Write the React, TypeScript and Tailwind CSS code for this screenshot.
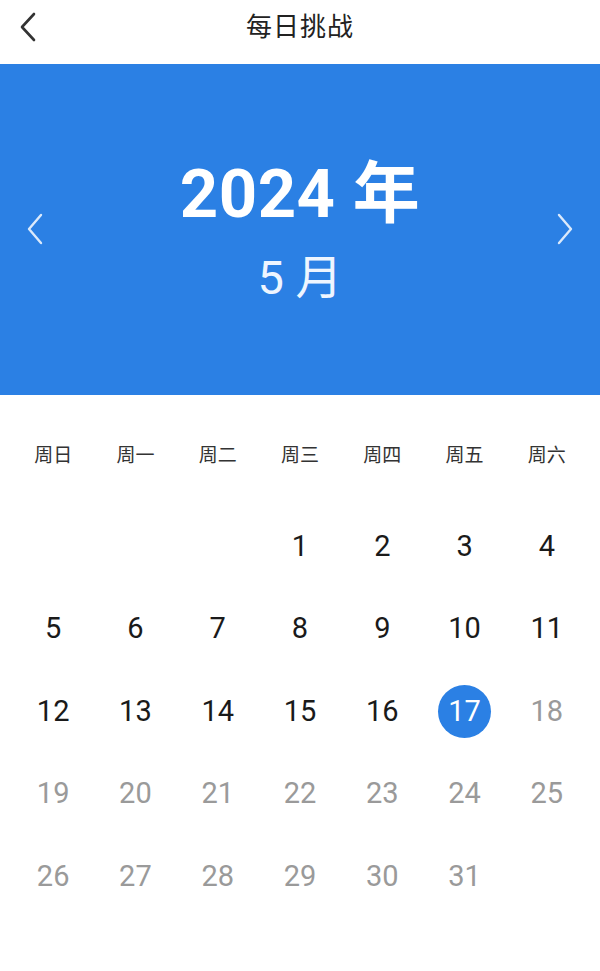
const weekDays = ['周日', '周一', '周二', '周三', '周四', '周五', '周六']

// May 2024 starts on a Wednesday
const cells: (number | null)[] = [null, null, null, ...Array.from({ length: 31 }, (_, i) => i + 1)]
const today = 17

function Chevron({ dir }: { dir: 'left' | 'right' }) {
  return (
    <svg width="22" height="34" viewBox="0 0 22 34" fill="none" stroke="currentColor" strokeWidth="2.4" strokeLinecap="round" strokeLinejoin="round" className="text-[#dbe9fb]">
      <path d={dir === 'left' ? 'M17 3 L5 17 L17 31' : 'M5 3 L17 17 L5 31'} />
    </svg>
  )
}

export default function App() {
  return (
    <div
      className="w-[600px] h-[971px] bg-white overflow-hidden"
      style={{ fontFamily: 'Roboto, "Noto Sans CJK SC", sans-serif' }}
    >
      {/* Top bar */}
      <div className="relative h-[64px] flex items-center justify-center">
        <button className="absolute left-[13px] top-[10px] text-[#333]">
          <svg width="30" height="34" viewBox="0 0 30 34" fill="none" stroke="currentColor" strokeWidth="2.6" strokeLinecap="round" strokeLinejoin="round">
            <path d="M21 4 L9 17 L21 30" />
          </svg>
        </button>
        <h1 className="text-[26px] text-[#222] tracking-[1px] -mt-[10px]">每日挑战</h1>
      </div>

      {/* Month banner */}
      <div className="h-[331px] bg-[#2b80e4] flex items-center justify-between px-[24px]">
        <div className="-mt-[2px]"><Chevron dir="left" /></div>
        <div className="flex flex-col items-center text-white mt-[2px]">
          <div className="text-[67px] font-bold leading-none tracking-[0.5px]">2024 年</div>
          <div className="text-[47px] leading-none mt-[26px] text-[#eef5ff]">5 月</div>
        </div>
        <div className="-mt-[2px]"><Chevron dir="right" /></div>
      </div>

      {/* Calendar */}
      <div className="px-[12px] pt-[44px]">
        <div className="grid grid-cols-7">
          {weekDays.map((d) => (
            <div key={d} className="h-[34px] flex items-center justify-center text-[19px] text-[#333]">
              {d}
            </div>
          ))}
        </div>
        <div className="grid grid-cols-7 mt-[32px]">
          {cells.map((n, i) => (
            <div key={i} className="h-[82.5px] flex items-center justify-center">
              {n === null ? null : n === today ? (
                <div className="w-[53px] h-[53px] rounded-full bg-[#2b80e4] flex items-center justify-center text-white text-[29px]">
                  {n}
                </div>
              ) : (
                <span className={`text-[29px] ${n < today ? 'text-[#1a1a1a]' : 'text-[#9a9a9a]'}`}>{n}</span>
              )}
            </div>
          ))}
        </div>
      </div>
    </div>
  )
}
